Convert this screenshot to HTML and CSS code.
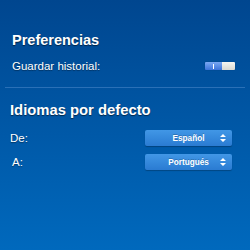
FILE: index.html
```html
<!DOCTYPE html>
<html lang="es">
<head>
    <meta charset="UTF-8">
    <meta name="viewport" content="width=device-width, initial-scale=1.0">
    <title>Preferencias</title>
    <link rel="stylesheet" href="styles.css">
</head>
<body>
    <div class="screen">
        <div class="section prefs">
            <h2>Preferencias</h2>
            <div class="row">
                <span class="label">Guardar historial:</span>
                <div class="toggle">
                    <div class="toggle-on"><span class="tick"></span></div>
                    <div class="toggle-knob"></div>
                </div>
            </div>
        </div>

        <hr class="divider">

        <div class="section langs">
            <h2>Idiomas por defecto</h2>
            <div class="row">
                <span class="label">De:</span>
                <div class="select">
                    <span class="select-text">Español</span>
                    <svg class="arrows" width="6" height="8" viewBox="0 0 6 8">
                        <path d="M3 0 L6 3 L0 3 Z M0 5 L6 5 L3 8 Z" fill="#fff"/>
                    </svg>
                </div>
            </div>
            <div class="row">
                <span class="label label-a">A:</span>
                <div class="select">
                    <span class="select-text">Portugués</span>
                    <svg class="arrows" width="6" height="8" viewBox="0 0 6 8">
                        <path d="M3 0 L6 3 L0 3 Z M0 5 L6 5 L3 8 Z" fill="#fff"/>
                    </svg>
                </div>
            </div>
        </div>
    </div>
</body>
</html>
```

FILE: styles.css
```css
html, body {
    margin: 0;
    padding: 0;
    height: 100%;
}
body {
    font-family: 'Liberation Sans', Arial, sans-serif;
    background: linear-gradient(#00468f, #0069bd);
    color: #fff;
}
.screen {
    padding-top: 32px;
}
h2 {
    margin: 0;
    font-weight: bold;
    line-height: 17px;
    text-shadow: 0 1px 1px rgba(0,0,0,0.55);
}
.prefs {
    padding: 0 15px 0 12px;
}
.prefs h2 {
    font-size: 14.5px;
    margin-bottom: 9px;
}
.row {
    display: flex;
    justify-content: space-between;
    align-items: center;
    height: 16px;
}
.label {
    font-size: 11.5px;
    line-height: 16px;
    text-shadow: 0 1px 1px rgba(0,0,0,0.4);
}
.toggle {
    display: flex;
    width: 30px;
    height: 8px;
    border-radius: 1px;
    overflow: hidden;
    box-shadow: 0 0 1px rgba(0,0,0,0.3);
}
.toggle-on {
    width: 17px;
    background: linear-gradient(#7aa8f2, #3b74da);
    display: flex;
    justify-content: flex-end;
    align-items: center;
    padding-right: 8px;
    box-sizing: border-box;
}
.tick {
    width: 1px;
    height: 5px;
    background: #fff;
}
.toggle-knob {
    flex: 1;
    background: linear-gradient(#f6f6f2, #d9d9d2);
}
.divider {
    border: 0;
    height: 1px;
    background: rgba(120,170,230,0.35);
    margin: 13px 5px 14px;
}
.langs {
    padding: 0 18px 0 10px;
}
.langs h2 {
    font-size: 14.8px;
    margin-bottom: 11px;
}
.langs .row {
    margin-bottom: 8px;
}
.label-a {
    margin-left: 2px;
}
.select {
    display: grid;
    grid-template-columns: 18px 1fr 18px;
    align-items: center;
    width: 87px;
    height: 16px;
    box-sizing: border-box;
    border-radius: 2px;
    background: linear-gradient(#4197e6, #2a7bd2);
    box-shadow: 0 1px 1px rgba(0,0,0,0.25);
}
.select-text {
    grid-column: 2;
    text-align: center;
    font-size: 8.2px;
    font-weight: bold;
    text-shadow: 0 -1px 0 rgba(0,0,0,0.2);
}
.arrows {
    justify-self: center;
}
```
